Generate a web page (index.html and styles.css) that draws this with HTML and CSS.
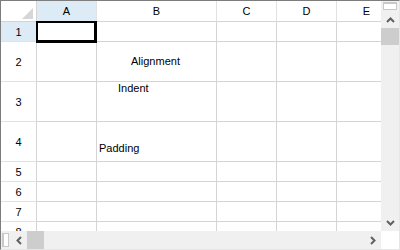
FILE: index.html
```html
<!DOCTYPE html>
<html lang="en">
<head>
  <meta charset="UTF-8">
  <title>Sheet</title>
  <link rel="stylesheet" href="styles.css">
</head>
<body>
  <div class="frame">
    <!-- Sheet grid -->
    <div class="sheet">
      <div class="hd corner"><span class="tri"></span></div>
      <div class="hd col sel">A</div>
      <div class="hd col">B</div>
      <div class="hd col">C</div>
      <div class="hd col">D</div>
      <div class="hd col">E</div>

      <div class="hd row sel">1</div>
      <div class="cell"></div><div class="cell"></div><div class="cell"></div><div class="cell"></div><div class="cell"></div>

      <div class="hd row">2</div>
      <div class="cell"></div><div class="cell center">Alignment</div><div class="cell"></div><div class="cell"></div><div class="cell"></div>

      <div class="hd row">3</div>
      <div class="cell"></div><div class="cell indent">Indent</div><div class="cell"></div><div class="cell"></div><div class="cell"></div>

      <div class="hd row">4</div>
      <div class="cell"></div><div class="cell padded">Padding</div><div class="cell"></div><div class="cell"></div><div class="cell"></div>

      <div class="hd row">5</div>
      <div class="cell"></div><div class="cell"></div><div class="cell"></div><div class="cell"></div><div class="cell"></div>

      <div class="hd row">6</div>
      <div class="cell"></div><div class="cell"></div><div class="cell"></div><div class="cell"></div><div class="cell"></div>

      <div class="hd row">7</div>
      <div class="cell"></div><div class="cell"></div><div class="cell"></div><div class="cell"></div><div class="cell"></div>

      <div class="hd row">8</div>
      <div class="cell"></div><div class="cell"></div><div class="cell"></div><div class="cell"></div><div class="cell"></div>

      <!-- Active cell -->
      <div class="active"></div>
    </div>

    <!-- Vertical scrollbar -->
    <div class="vscroll">
      <div class="split-v"></div>
      <div class="arrow">
        <svg width="9" height="6" viewBox="0 0 9 6"><path d="M1 5 L4.5 1.5 L8 5" fill="none" stroke="#606060" stroke-width="2"/></svg>
      </div>
      <div class="thumb-v"></div>
      <div class="track"></div>
      <div class="arrow">
        <svg width="9" height="6" viewBox="0 0 9 6"><path d="M1 1 L4.5 4.5 L8 1" fill="none" stroke="#606060" stroke-width="2"/></svg>
      </div>
    </div>

    <!-- Horizontal scrollbar -->
    <div class="hscroll">
      <div class="split-h"></div>
      <div class="arrow">
        <svg width="6" height="9" viewBox="0 0 6 9"><path d="M5 1 L1.5 4.5 L5 8" fill="none" stroke="#606060" stroke-width="2"/></svg>
      </div>
      <div class="thumb-h"></div>
      <div class="track"></div>
      <div class="arrow">
        <svg width="6" height="9" viewBox="0 0 6 9"><path d="M1 1 L4.5 4.5 L1 8" fill="none" stroke="#606060" stroke-width="2"/></svg>
      </div>
    </div>

    <div class="sizer"></div>
  </div>
</body>
</html>
```

FILE: styles.css
```css
:root {
  --grid-line: #d4d4d4;
  --head-line: #e2e2e2;
  --head-sel: #ddebf6;
  --bar-bg: #f0f0f0;
  --thumb: #cdcdcd;
}
body {
  margin: 0;
  padding: 0;
  background: #ffffff;
  font-family: "Liberation Sans", Arial, sans-serif;
  font-size: 11px;
  color: #000000;
}
/* Outer frame */
.frame {
  width: 400px;
  height: 250px;
  box-sizing: border-box;
  border-top: 1px solid #7d7d7d;
  border-left: 1px solid #7d7d7d;
  border-right: 1px solid #e6e6e6;
  border-bottom: 1px solid #e6e6e6;
  display: grid;
  grid-template-columns: 380px 18px;
  grid-template-rows: 230px 18px;
  overflow: hidden;
}
/* Sheet */
.sheet {
  position: relative;
  display: grid;
  grid-template-columns: 36px 60px 120px 60px 60px 60px;
  grid-template-rows: 21px 20px 40px 40px 40px 20px 20px 20px 20px;
  overflow: hidden;
}
.hd {
  box-sizing: border-box;
  background: #ffffff;
  border-right: 1px solid var(--head-line);
  border-bottom: 1px solid var(--head-line);
  display: flex;
  align-items: center;
  justify-content: center;
}
.hd.col {
  border-bottom-color: var(--grid-line);
}
.hd.row {
  border-right-color: var(--grid-line);
}
.hd.sel {
  background: var(--head-sel);
}
.corner {
  position: relative;
  border-right-color: var(--grid-line);
  border-bottom-color: var(--grid-line);
}
.tri {
  position: absolute;
  right: 3px;
  bottom: 2px;
  width: 0;
  height: 0;
  border-left: 11px solid transparent;
  border-bottom: 11px solid #d6d6d6;
}
.cell {
  box-sizing: border-box;
  border-right: 1px solid var(--grid-line);
  border-bottom: 1px solid var(--grid-line);
  display: flex;
  white-space: nowrap;
}
.cell.center {
  align-items: center;
  justify-content: center;
  padding-bottom: 2px;
  padding-right: 2px;
}
.cell.indent {
  align-items: flex-start;
  padding-left: 21px;
}
.cell.padded {
  align-items: flex-end;
  padding-left: 2px;
  padding-bottom: 7px;
}
.active {
  position: absolute;
  left: 35px;
  top: 20px;
  width: 61px;
  height: 22px;
  box-sizing: border-box;
  border-top: 2px solid #000000;
  border-left: 2px solid #000000;
  border-right: 3px solid #000000;
  border-bottom: 3px solid #000000;
}
/* Scrollbars */
.vscroll {
  background: var(--bar-bg);
  display: flex;
  flex-direction: column;
}
.hscroll {
  background: var(--bar-bg);
  display: flex;
}
.arrow {
  width: 17px;
  height: 17px;
  flex: none;
  display: flex;
  align-items: center;
  justify-content: center;
}
.vscroll .arrow {
  width: 18px;
}
.hscroll .arrow {
  height: 18px;
}
.track {
  flex: 1;
}
.thumb-v {
  height: 17px;
  background: var(--thumb);
  flex: none;
}
.thumb-h {
  width: 17px;
  background: var(--thumb);
  flex: none;
}
.split-v {
  height: 5px;
  margin: 1px 2px 1px 2px;
  border: 1px solid #c8c8c8;
  border-top: 2px solid #c8c8c8;
  background: #ffffff;
  flex: none;
}
.split-h {
  width: 4px;
  margin: 2px 1px 2px 1px;
  border: 1px solid #c8c8c8;
  border-left: 2px solid #c8c8c8;
  background: #ffffff;
  flex: none;
}
.sizer {
  background: #ffffff;
}
```
